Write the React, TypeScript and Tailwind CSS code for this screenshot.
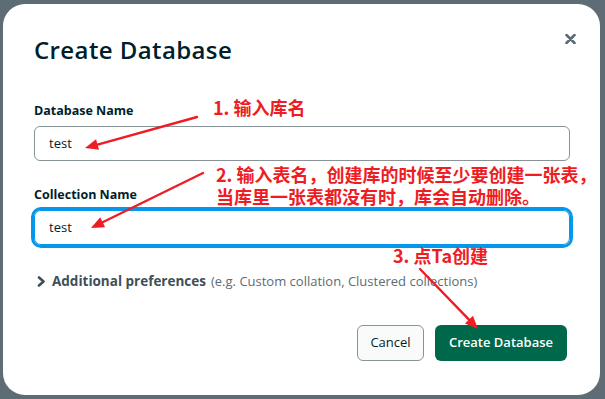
import React from "react";

const ui = { fontFamily: "'Open Sans', Lato, sans-serif" };
const cjk = { fontFamily: "'Noto Sans CJK SC', 'Noto Sans', sans-serif" };

function Arrow({ x1, y1, x2, y2 }: { x1: number; y1: number; x2: number; y2: number }) {
  const a = Math.atan2(y2 - y1, x2 - x1);
  const len = 13;
  const w = 5.5;
  const bx = x2 - len * Math.cos(a);
  const by = y2 - len * Math.sin(a);
  const p1 = `${bx + w * Math.sin(a)},${by - w * Math.cos(a)}`;
  const p2 = `${bx - w * Math.sin(a)},${by + w * Math.cos(a)}`;
  return (
    <g>
      <line x1={x1} y1={y1} x2={bx} y2={by} stroke="#ee1d24" strokeWidth={2.4} strokeLinecap="round" />
      <polygon points={`${x2},${y2} ${p1} ${p2}`} fill="#ee1d24" />
    </g>
  );
}

function Field({ label, value, focused }: { label: string; value: string; focused?: boolean }) {
  return (
    <div className="flex flex-col gap-[7px]">
      <label className="text-[12.5px] leading-[16px] font-bold text-[#001e2b]">{label}</label>
      <div
        className={
          focused
            ? "flex h-[35px] items-center rounded-[7px] border border-[#0498ec] pl-[14px] text-[13px] text-[#001e2b] shadow-[0_0_0_3px_#0498ec]"
            : "flex h-[35px] items-center rounded-[6px] border border-[#889397] pl-[14px] text-[13px] text-[#001e2b]"
        }
      >
        {value}
      </div>
    </div>
  );
}

export default function App() {
  return (
    <div className="relative h-[399px] w-[605px] overflow-hidden bg-[#5e6d75] pl-[3px] pt-[4px]" style={ui}>
      <div className="relative flex h-[391px] w-[597px] flex-col rounded-[22px] bg-white pl-[31px] pr-[30px] pt-[30px]">
        <button className="absolute right-[22px] top-[27px] flex h-[16px] w-[16px] items-center justify-center">
          <svg width="11" height="10" viewBox="0 0 11 10">
            <path d="M1.5 1 L9.5 9 M9.5 1 L1.5 9" stroke="#5c6c75" strokeWidth="2.6" strokeLinecap="round" />
          </svg>
        </button>

        <h1 className="text-[24px] leading-[32px] font-semibold text-[#001e2b] tracking-[0.4px]">Create Database</h1>

        <div className="mt-[37px] flex flex-col gap-[26px]">
          <Field label="Database Name" value="test" />
          <Field label="Collection Name" value="test" focused />
        </div>

        <div className="mt-[26px] flex items-center text-[13.5px] leading-[20px]">
          <svg width="9" height="11" viewBox="0 0 9 11" className="ml-[3px] mr-[6px]">
            <path d="M2 1.5 L6.5 5.5 L2 9.5" stroke="#3d4f58" strokeWidth="2.6" fill="none" strokeLinecap="round" strokeLinejoin="round" />
          </svg>
          <span className="font-bold text-[#3d4f58]">Additional preferences</span>
          <span className="ml-[5px] text-[13px] text-[#5c6c75]">(e.g. Custom collation, Clustered collections)</span>
        </div>

        <div className="mr-[3px] mt-[34px] flex justify-end gap-[11px]">
          <button className="h-[36px] w-[67px] rounded-[6px] border border-[#889397] bg-[#f9fbfa] text-[13px] text-[#001e2b]">
            Cancel
          </button>
          <button className="h-[36px] w-[132px] rounded-[6px] bg-[#00684a] text-[13px] font-semibold text-white">
            Create Database
          </button>
        </div>
      </div>

      {/* screenshot annotations */}
      <div className="pointer-events-none absolute inset-0 font-bold text-[#ee1d24]" style={cjk}>
        <div className="absolute left-[213px] top-[96px] text-[18px] leading-[22px]">1. 输入库名</div>
        <div className="absolute left-[216px] top-[163px] flex flex-col text-[18px] leading-[22px]">
          <span>2. 输入表名，创建库的时候至少要创建一张表，</span>
          <span>当库里一张表都没有时，库会自动删除。</span>
        </div>
        <div className="absolute left-[393px] top-[244px] text-[18px] leading-[22px]">3. 点Ta创建</div>
        <svg className="absolute left-0 top-0" width="605" height="399">
          <Arrow x1={197} y1={117} x2={85} y2={148} />
          <Arrow x1={203} y1={173} x2={91} y2={228} />
          <Arrow x1={420} y1={269} x2={478} y2={329} />
        </svg>
      </div>
    </div>
  );
}
